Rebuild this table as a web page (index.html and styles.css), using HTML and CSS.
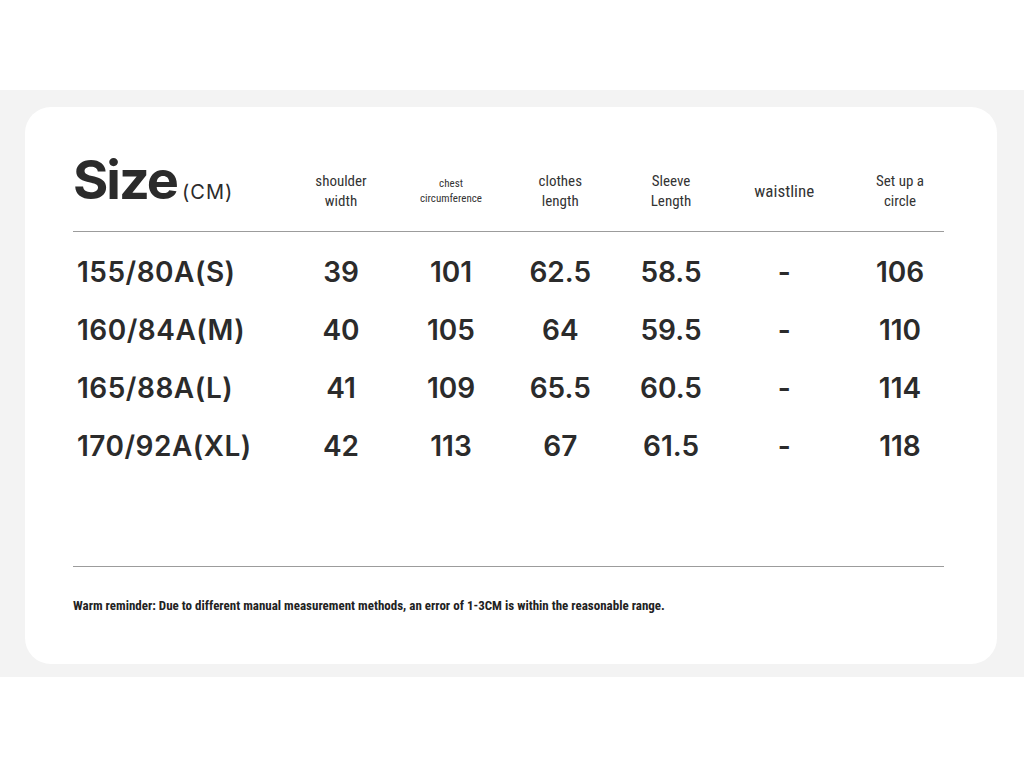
FILE: index.html
```html
<!DOCTYPE html>
<html lang="en">
<head>
<meta charset="utf-8">
<title>Size chart</title>
<link rel="stylesheet" href="styles.css">
</head>
<body>
<div class="band">
  <div class="card">
    <div class="grid head">
      <div class="title">Size<span class="unit">(CM)</span></div>
      <div class="lbl">shoulder<br>width</div>
      <div class="lbl small">chest<br>circumference</div>
      <div class="lbl">clothes<br>length</div>
      <div class="lbl">Sleeve<br>Length</div>
      <div class="lbl big">waistline</div>
      <div class="lbl">Set up a<br>circle</div>
    </div>
    <div class="rule"></div>
    <div class="rows">
      <div class="grid row"><div class="size">155/80A(S)</div><div>39</div><div>101</div><div>62.5</div><div>58.5</div><div>-</div><div>106</div></div>
      <div class="grid row"><div class="size">160/84A(M)</div><div>40</div><div>105</div><div>64</div><div>59.5</div><div>-</div><div>110</div></div>
      <div class="grid row"><div class="size">165/88A(L)</div><div>41</div><div>109</div><div>65.5</div><div>60.5</div><div>-</div><div>114</div></div>
      <div class="grid row"><div class="size">170/92A(XL)</div><div>42</div><div>113</div><div>67</div><div>61.5</div><div>-</div><div>118</div></div>
    </div>
    <div class="rule bottom"></div>
    <p class="note">Warm reminder: Due to different manual measurement methods, an error of 1-3CM is within the reasonable range.</p>
  </div>
</div>
</body>
</html>
```
FILE: styles.css
```css
html, body {
  margin: 0;
  padding: 0;
  background: #ffffff;
}
body {
  font-family: "Inter", "Liberation Sans", sans-serif;
  color: #2e2e2e;
}
.band {
  margin-top: 90px;
  height: 587px;
  box-sizing: border-box;
  background: #f3f3f3;
  padding: 17px 0 0 25px;
}
.card {
  width: 972px;
  height: 557px;
  box-sizing: border-box;
  background: #ffffff;
  border-radius: 26px;
  padding: 44px 0 0 48px;
}
.grid {
  display: grid;
  grid-template-columns: 212.5px 111px 109px 109.5px 112px 114.5px 117px;
  align-items: center;
  text-align: center;
}
.head {
  height: 80px;
}
.title {
  align-self: start;
  padding-top: 2px;
  text-align: left;
  font-size: 54px;
  line-height: 54px;
  font-weight: 700;
  letter-spacing: -2px;
  color: #2b2b2b;
}
.unit {
  font-size: 20px;
  font-weight: 400;
  letter-spacing: 1px;
  margin-left: 5px;
}
.lbl {
  font-family: "Liberation Sans Narrow", "Roboto Condensed", "Liberation Sans", sans-serif;
  font-size: 15px;
  line-height: 20px;
  color: #333;
}
.lbl.small {
  font-size: 11px;
  line-height: 15px;
}
.lbl.big {
  font-size: 17px;
}
.rule {
  width: 871px;
  height: 1px;
  background: #9c9c9c;
}
.rows {
  padding-top: 11px;
}
.row {
  height: 58px;
  font-size: 28px;
  font-weight: 600;
  color: #2b2b2b;
}
.row .size {
  text-align: left;
  padding-left: 4px;
  letter-spacing: 0.5px;
}
.rule.bottom {
  margin-top: 91px;
}
.note {
  margin: 29px 0 0 0;
  font-family: "Liberation Sans Narrow", "Roboto Condensed", "Liberation Sans", sans-serif;
  font-size: 13px;
  line-height: 20px;
  font-weight: 700;
  color: #222;
}
```
